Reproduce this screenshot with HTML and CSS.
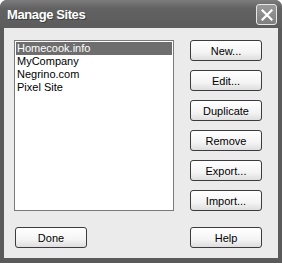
FILE: index.html
```html
<!DOCTYPE html>
<html lang="en">
<head>
    <meta charset="UTF-8">
    <title>Manage Sites</title>
    <link rel="stylesheet" href="styles.css">
</head>
<body>
    <div class="window">
        <div class="title-bar">
            <span class="title">Manage Sites</span>
            <button class="close-button">
                <svg width="12" height="12" viewBox="0 0 12 12">
                    <path d="M1.5 1.5 L10.5 10.5 M10.5 1.5 L1.5 10.5" stroke="#fff" stroke-width="2.2" stroke-linecap="square"/>
                </svg>
            </button>
        </div>
        <div class="client">
            <div class="main-row">
                <ul class="site-list">
                    <li class="selected">Homecook.info</li>
                    <li>MyCompany</li>
                    <li>Negrino.com</li>
                    <li>Pixel Site</li>
                </ul>
                <div class="side-buttons">
                    <button class="btn">New...</button>
                    <button class="btn">Edit...</button>
                    <button class="btn">Duplicate</button>
                    <button class="btn">Remove</button>
                    <button class="btn">Export...</button>
                    <button class="btn">Import...</button>
                </div>
            </div>
            <div class="bottom-row">
                <button class="btn">Done</button>
                <button class="btn">Help</button>
            </div>
        </div>
    </div>
</body>
</html>
```

FILE: styles.css
```css
body {
    margin: 0;
    background-color: #ffffff;
    font-family: 'Liberation Sans', Arial, sans-serif;
}

.window {
    width: 282px;
    height: 263px;
    box-sizing: border-box;
    background-color: #5a5a5a;
    border-radius: 7px 7px 0 0;
    padding: 0 4px 5px 4px;
    display: flex;
    flex-direction: column;
}

.title-bar {
    height: 28px;
    display: flex;
    align-items: center;
    justify-content: space-between;
    background: linear-gradient(#7c7c7c, #626262 30%, #5c5c5c);
    border-radius: 7px 7px 0 0;
    margin: 0 -4px;
    padding: 0 5px 0 7px;
}

.title {
    color: #ffffff;
    font-size: 13px;
    font-weight: bold;
    letter-spacing: -0.4px;
    padding-top: 1px;
    text-shadow: 1px 1px 0 #3e3e3e;
}

.close-button {
    width: 21px;
    height: 21px;
    padding: 0;
    margin-top: 1px;
    display: flex;
    align-items: center;
    justify-content: center;
    background: linear-gradient(#9a9a9a, #7e7e7e);
    border: 1px solid #e6e6e6;
    border-radius: 3px;
}

.client {
    flex: 1;
    background-color: #ebebeb;
    padding: 12px 16px 0 10px;
}

.main-row {
    display: flex;
    justify-content: space-between;
    height: 171px;
}

.site-list {
    width: 160px;
    box-sizing: border-box;
    margin: 0;
    padding: 1px;
    list-style: none;
    background-color: #ffffff;
    border: 1px solid #7a7a7a;
    font-size: 11px;
}

.site-list li {
    height: 13px;
    line-height: 13px;
    padding-left: 1px;
    color: #000000;
}

.site-list li.selected {
    background-color: #6e6e6e;
    color: #ffffff;
}

.side-buttons {
    display: flex;
    flex-direction: column;
    justify-content: space-between;
}

.btn {
    width: 72px;
    height: 21px;
    padding: 0;
    font-family: 'Liberation Sans', Arial, sans-serif;
    font-size: 11px;
    color: #000000;
    background: linear-gradient(#ffffff, #f4f4f4 60%, #dedede);
    border: 1px solid #3c3c3c;
    border-radius: 3px;
}

.bottom-row {
    display: flex;
    justify-content: space-between;
    margin-top: 16px;
    padding-left: 1px;
}
```
